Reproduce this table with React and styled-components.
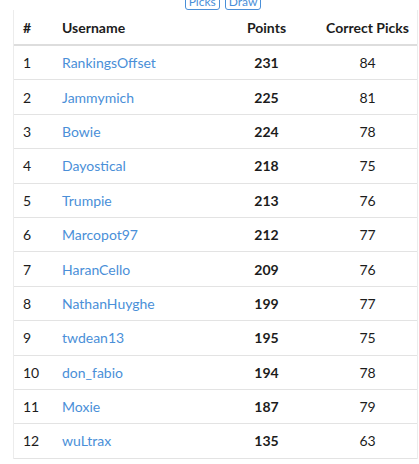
import React from "react";
import styled, { createGlobalStyle } from "styled-components";

const rows = [
  [1, "RankingsOffset", 231, 84],
  [2, "Jammymich", 225, 81],
  [3, "Bowie", 224, 78],
  [4, "Dayostical", 218, 75],
  [5, "Trumpie", 213, 76],
  [6, "Marcopot97", 212, 77],
  [7, "HaranCello", 209, 76],
  [8, "NathanHuyghe", 199, 77],
  [9, "twdean13", 195, 75],
  [10, "don_fabio", 194, 78],
  [11, "Moxie", 187, 79],
  [12, "wuLtrax", 135, 63],
];

const GlobalStyle = createGlobalStyle`
  body {
    margin: 0;
    background: #fff;
    font-family: Lato, "Liberation Sans", sans-serif;
    color: #222;
    overflow: hidden;
  }
`;

const Page = styled.div`
  width: 419px;
  height: 464px;
  overflow: hidden;
`;

const Tabs = styled.div`
  display: flex;
  justify-content: center;
  gap: 5px;
  margin-top: -6px;
  padding-left: 27px;
  height: 16px;
`;

const TabButton = styled.span`
  display: inline-block;
  box-sizing: border-box;
  height: 16px;
  padding: 0 3px;
  border: 1px solid #4a8fd8;
  border-radius: 3px;
  font-size: 12px;
  line-height: 14px;
  color: #4a8fd8;
`;

const Card = styled.div`
  margin-left: 13px;
  width: 405px;
  box-sizing: border-box;
  border-left: 1px solid #ececec;
  border-right: 1px solid #ececec;
`;

const Row = styled.div`
  display: grid;
  grid-template-columns: 39px 163px 101px 101px;
  align-items: center;
  box-sizing: border-box;
  height: ${(p) => (p.$head ? "36px" : "34.4px")};
  border-bottom: ${(p) => (p.$head ? "2px solid #dddddd" : "1px solid #e3e3e3")};
  font-size: 14px;
  font-weight: ${(p) => (p.$head ? 700 : 400)};
`;

const Cell = styled.div`
  padding-left: ${(p) => (p.$center ? "0" : "9px")};
  text-align: ${(p) => (p.$center ? "center" : "left")};
  font-weight: ${(p) => (p.$bold ? 700 : "inherit")};
  color: ${(p) => (p.$link ? "#4a8fd8" : "#1c1c1c")};
  white-space: nowrap;
`;

export default function App() {
  return (
    <Page>
      <GlobalStyle />
      <Tabs>
        <TabButton>Picks</TabButton>
        <TabButton>Draw</TabButton>
      </Tabs>
      <Card>
        <Row $head>
          <Cell>#</Cell>
          <Cell>Username</Cell>
          <Cell $center>Points</Cell>
          <Cell $center>Correct Picks</Cell>
        </Row>
        {rows.map(([rank, name, points, correct]) => (
          <Row key={rank}>
            <Cell>{rank}</Cell>
            <Cell $link>{name}</Cell>
            <Cell $center $bold>{points}</Cell>
            <Cell $center>{correct}</Cell>
          </Row>
        ))}
      </Card>
    </Page>
  );
}
